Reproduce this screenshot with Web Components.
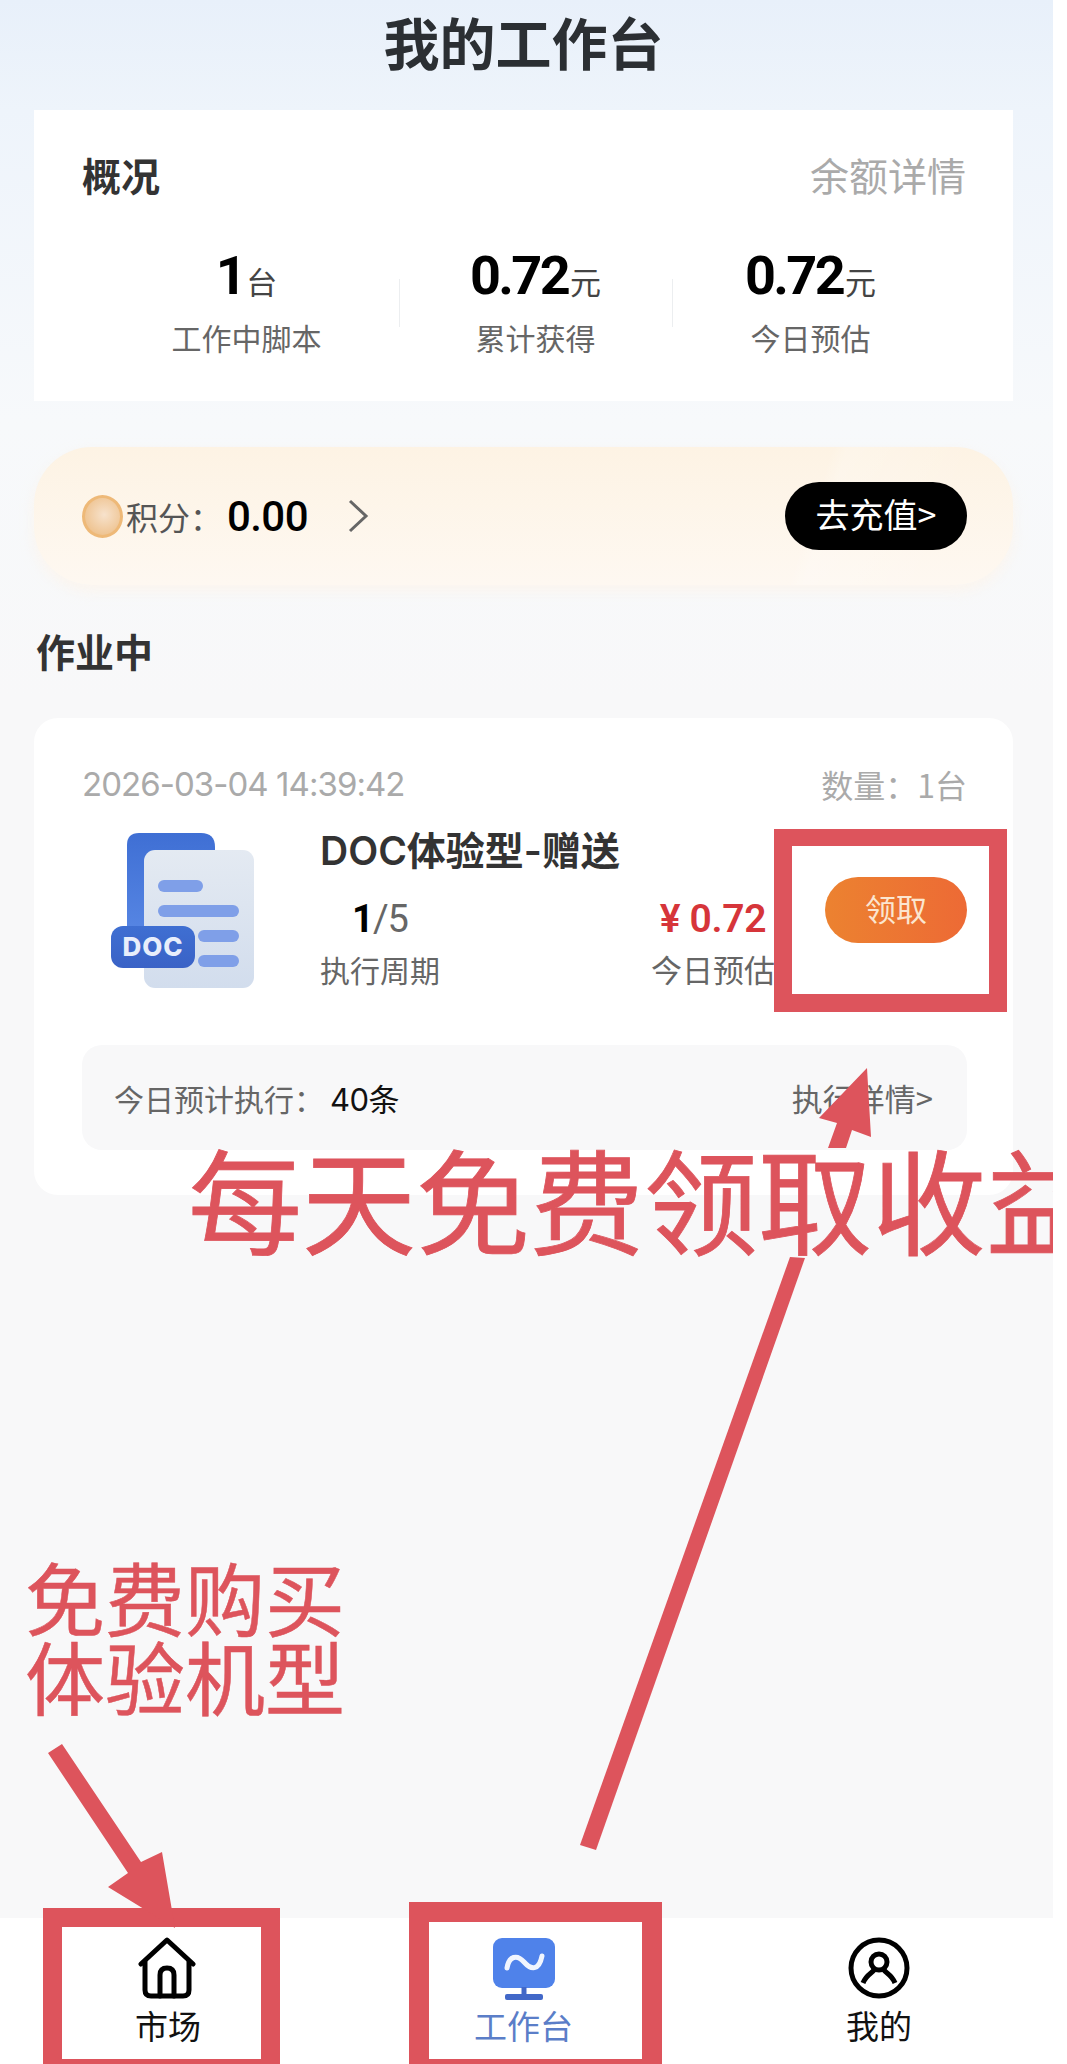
<!DOCTYPE html>
<html lang="zh">
<head>
<meta charset="utf-8">
<title>我的工作台</title>
<style>
    html, body { margin: 0; padding: 0; background: #fff; }
    body { font-family: "Noto Sans CJK SC", sans-serif; }
</style>
</head>
<body>
<work-page>
    <page-title>我的工作台</page-title>

    <overview-card>
        <stat-item value="1" unit="台" label="工作中脚本"></stat-item>
        <stat-item value="0.72" unit="元" label="累计获得" divider></stat-item>
        <stat-item value="0.72" unit="元" label="今日预估" divider></stat-item>
    </overview-card>

    <points-banner></points-banner>

    <section-title>作业中</section-title>

    <job-card></job-card>

    <bottom-nav slot="nav">
        <nav-item label="市场"><svg width="62" height="64" viewBox="0 0 62 64" fill="none" stroke="#000" stroke-width="5" stroke-linejoin="round" stroke-linecap="round"><path d="M4 27 30 3 56 27"/><path d="M8 25V53q0 6 6 6H46q6 0 6-6V25"/><path d="M23 59V38q0-7 7-7t7 7V59"/></svg></nav-item>
        <nav-item label="工作台" active><svg width="62" height="64" viewBox="0 0 62 64" fill="none"><rect x="0" y="1" width="62" height="50" rx="9" fill="#4f82ea"/><path d="M31 50V58" stroke="#4268c8" stroke-width="5"/><rect x="12" y="57" width="38" height="6" rx="2" fill="#4268c8"/><path d="M14 31C16 19 24 17 31 25S46 34 49 19" stroke="#fff" stroke-width="5" stroke-linecap="round" opacity=".92"/></svg></nav-item>
        <nav-item label="我的"><svg width="62" height="64" viewBox="0 0 62 64" fill="none" stroke="#000" stroke-width="5"><circle cx="31" cy="31" r="28"/><circle cx="31" cy="25" r="8"/><path d="M15 46C18 38 24 36 26 33M47 46C44 38 38 36 36 33"/></svg></nav-item>
    </bottom-nav>

    <note-layer slot="notes"></note-layer>
</work-page>

<script>
// page shell, the white strip on the right comes from the screenshot itself
class WorkPage extends HTMLElement {
    constructor() {
        super();
        this.attachShadow({ mode: 'open' }).innerHTML = `
            <style>
                :host { display: block; position: relative; width: 1067px; height: 2064px; overflow: hidden; background: #fff; }
                .screen {
                    width: 1053px; height: 2064px; display: flex; flex-direction: column;
                    background: linear-gradient(180deg, #e8f0fa 0, #eef4fb 110px, #f7f9fb 420px, #f8f8f9 700px);
                }
                .content { flex: 1; display: flex; flex-direction: column; }
            </style>
            <div class="screen">
                <div class="content"><slot></slot></div>
                <slot name="nav"></slot>
            </div>
            <slot name="notes"></slot>
        `;
    }
}

class PageTitle extends HTMLElement {
    constructor() {
        super();
        this.attachShadow({ mode: 'open' }).innerHTML = `
            <style>
                :host { display: block; height: 110px; padding-right: 6px; text-align: center; font-size: 56px; font-weight: 700; line-height: 82px; color: #2b2f33; }
            </style>
            <slot></slot>
        `;
    }
}

class OverviewCard extends HTMLElement {
    constructor() {
        super();
        this.attachShadow({ mode: 'open' }).innerHTML = `
            <style>
                :host { display: block; margin: 0 40px 0 34px; height: 291px; box-sizing: border-box; padding: 36px 47px 0 48px; background: #fff; }
                .head { display: flex; justify-content: space-between; align-items: center; height: 56px; }
                .name { font-size: 39px; font-weight: 700; color: #333; }
                .more { font-size: 39px; color: #aaa; }
                .stats { display: grid; grid-template-columns: 305px 273px 277px; margin: 41px 0 0 12px; }
            </style>
            <div class="head"><span class="name">概况</span><span class="more">余额详情</span></div>
            <div class="stats"><slot></slot></div>
        `;
    }
}

class StatItem extends HTMLElement {
    constructor() {
        super();
        const hasLine = this.hasAttribute('divider');
        this.attachShadow({ mode: 'open' }).innerHTML = `
            <style>
                :host { display: block; position: relative; text-align: center; }
                .line { position: absolute; left: 0; top: 36px; height: 48px; width: 1px; background: #eceef0; }
                .num { height: 66px; line-height: 66px; white-space: nowrap; }
                .v { font-family: Roboto, "Noto Sans CJK SC", sans-serif; font-size: 54px; font-weight: 700; letter-spacing: -2.6px; color: #000; }
                .u { font-size: 31px; color: #444; margin-left: 2px; }
                .label { margin-top: 6px; font-size: 30px; line-height: 44px; color: #666; }
            </style>
            ${hasLine ? '<div class="line"></div>' : ''}
            <div class="num"><span class="v">${this.getAttribute('value')}</span><span class="u">${this.getAttribute('unit')}</span></div>
            <div class="label">${this.getAttribute('label')}</div>
        `;
    }
}

class PointsBanner extends HTMLElement {
    constructor() {
        super();
        this.attachShadow({ mode: 'open' }).innerHTML = `
            <style>
                :host {
                    display: flex; align-items: center; margin: 46px 40px 0 34px; height: 138px; box-sizing: border-box; padding: 0 46px 0 48px;
                    border-radius: 58px;
                    background:
                        linear-gradient(108deg, transparent 0, transparent 78%, rgba(255,255,255,.2) 79.5%, rgba(255,255,255,0) 92%),
                        linear-gradient(180deg, #fdf3e4 0, #fef8f1 100%);
                    box-shadow: 0 6px 14px rgba(253, 244, 232, .7);
                }
                .coin {
                    width: 41px; height: 43px; border-radius: 50%; flex: none; box-sizing: border-box;
                    border: 3px solid #eeb978;
                    background: radial-gradient(circle at 55% 45%, #f7e2cc 0, #efc594 70%, #e8aa63 100%);
                }
                .lab { margin-left: 3px; font-size: 32px; color: #555; }
                .val { margin-left: 5px; font-family: Roboto, "Noto Sans CJK SC", sans-serif; font-size: 42px; font-weight: 500; letter-spacing: -.6px; color: #000; }
                svg { margin-left: 39px; flex: none; }
                .btn {
                    margin-left: auto; width: 182px; height: 68px; border-radius: 34px; background: #000; color: #fff;
                    font-size: 34px; line-height: 64px; text-align: center;
                }
            </style>
            <span class="coin"></span>
            <span class="lab">积分：</span>
            <span class="val">0.00</span>
            <svg width="22" height="36" viewBox="0 0 22 36" fill="none" stroke="#666" stroke-width="3"><path d="M3 3 19 18 3 33"/></svg>
            <span class="btn">去充值&gt;</span>
        `;
    }
}

class SectionTitle extends HTMLElement {
    constructor() {
        super();
        this.attachShadow({ mode: 'open' }).innerHTML = `
            <style>
                :host { display: block; margin: 40px 0 0 36px; height: 53px; font-size: 39px; font-weight: 700; line-height: 50px; color: #333; }
            </style>
            <slot></slot>
        `;
    }
}

class JobCard extends HTMLElement {
    constructor() {
        super();
        this.attachShadow({ mode: 'open' }).innerHTML = `
            <style>
                :host { display: block; margin: 40px 40px 0 34px; height: 477px; box-sizing: border-box; padding: 46px 46px 0 48px; background: #fff; border-radius: 24px; color: #666; }
                .top { display: flex; justify-content: space-between; align-items: center; height: 40px; color: #aaa; font-size: 33px; }
                .date { font-family: Inter, "Noto Sans CJK SC", sans-serif; letter-spacing: -.95px; }
                .count { font-size: 32px; }
                .body { display: flex; margin-top: 27px; height: 156px; }
                .pic { flex: none; width: 238px; padding-left: 27px; box-sizing: border-box; }
                .info { flex: 1; }
                .name { font-family: Inter, "Noto Sans CJK SC", sans-serif; font-size: 39px; font-weight: 600; line-height: 40px; color: #333; }
                .cols { display: flex; justify-content: space-between; margin-top: 25px; width: 455px; }
                .col { text-align: center; font-size: 30px; line-height: 40px; }
                .col b { display: block; height: 46px; line-height: 46px; font-family: Roboto, "Noto Sans CJK SC", sans-serif; font-weight: 400; font-size: 38px; letter-spacing: -1px; margin-bottom: 7px; }
                .col .done { font-weight: 700; color: #000; }
                .col.money { font-size: 31px; }
                .col.money b { color: #d6353a; font-weight: 600; font-size: 39px; letter-spacing: -.3px; }
                .get {
                    flex: none; align-self: flex-start; margin: 46px 0 0 0; width: 142px; height: 66px; border-radius: 33px;
                    background: linear-gradient(90deg, #ec8230, #ed6a35); color: #fbe6d0; font-size: 31px; line-height: 62px; text-align: center;
                }
                .strip {
                    display: flex; justify-content: space-between; align-items: center; margin-top: 58px; height: 105px; box-sizing: border-box; padding: 0 34px 0 32px;
                    background: #f8f8f9; border-radius: 20px; font-size: 30px;
                }
                .strip em { font-style: normal; margin-left: 6px; font-size: 31px; color: #111; font-family: Inter, "Noto Sans CJK SC", sans-serif; letter-spacing: -.5px; }
                .strip .go { font-size: 31px; }
            </style>
            <div class="top"><span class="date">2026-03-04 14:39:42</span><span class="count">数量：1台</span></div>
            <div class="body">
                <div class="pic">
                    <svg width="146" height="158" viewBox="0 0 146 158" font-family="Inter, sans-serif">
                        <defs>
                            <linearGradient id="back" x1="0" y1="0" x2="0" y2="1"><stop offset="0" stop-color="#3f6fd4"/><stop offset="1" stop-color="#5b8ae6"/></linearGradient>
                            <linearGradient id="sheet" x1="0" y1="0" x2="0" y2="1"><stop offset="0" stop-color="#e4eaf2"/><stop offset="1" stop-color="#d2dded"/></linearGradient>
                            <linearGradient id="tag" x1="0" y1="0" x2="0" y2="1"><stop offset="0" stop-color="#3f6fd2"/><stop offset="1" stop-color="#3a62c6"/></linearGradient>
                        </defs>
                        <path d="M18 14q0-12 12-12H92q14 0 14 14V120H18Z" fill="url(#back)"/>
                        <rect x="35" y="19" width="110" height="138" rx="11" fill="url(#sheet)"/>
                        <rect x="49" y="49" width="45" height="12" rx="6" fill="#7f9fe8"/>
                        <rect x="49" y="74" width="81" height="12" rx="6" fill="#7f9fe8"/>
                        <rect x="89" y="99" width="41" height="12" rx="6" fill="#7f9fe8"/>
                        <rect x="89" y="124" width="41" height="12" rx="6" fill="#7f9fe8"/>
                        <rect x="2" y="95" width="84" height="42" rx="12" fill="url(#tag)"/>
                        <text x="44" y="125" text-anchor="middle" font-size="26" font-weight="800" fill="#e8eefb" letter-spacing="1">DOC</text>
                    </svg>
                </div>
                <div class="info">
                    <div class="name">DOC体验型-赠送</div>
                    <div class="cols">
                        <div class="col"><b><span class="done">1</span>/5</b>执行周期</div>
                        <div class="col money"><b>¥ 0.72</b>今日预估</div>
                    </div>
                </div>
                <div class="get">领取</div>
            </div>
            <div class="strip">
                <span>今日预计执行：<em>40条</em></span>
                <span class="go">执行详情&gt;</span>
            </div>
        `;
    }
}

class BottomNav extends HTMLElement {
    constructor() {
        super();
        this.attachShadow({ mode: 'open' }).innerHTML = `
            <style>
                :host { display: flex; justify-content: space-between; height: 146px; box-sizing: border-box; padding: 19px 74px 0 68px; background: #fff; }
            </style>
            <slot></slot>
        `;
    }
}

class NavItem extends HTMLElement {
    constructor() {
        super();
        const color = this.hasAttribute('active') ? '#5b7ec8' : '#111';
        this.attachShadow({ mode: 'open' }).innerHTML = `
            <style>
                :host { display: flex; flex-direction: column; align-items: center; width: 200px; }
                .icon { height: 64px; }
                .label { margin-top: 2px; font-size: 33px; line-height: 44px; color: ${color}; }
            </style>
            <div class="icon"><slot></slot></div>
            <div class="label">${this.getAttribute('label')}</div>
        `;
    }
}

// the red marks added on top of the screenshot
class NoteLayer extends HTMLElement {
    constructor() {
        super();
        this.attachShadow({ mode: 'open' }).innerHTML = `
            <style>
                :host { position: absolute; left: 0; top: 0; width: 1067px; height: 2064px; pointer-events: none; }
                .frame { position: absolute; box-sizing: border-box; border: 0 solid #dd545c; }
                .big, .small { position: absolute; color: #dd545c; white-space: nowrap; }
                .big { left: 188px; top: 1137px; width: 865px; height: 120px; overflow: hidden; font-size: 114px; line-height: 120px; -webkit-text-stroke: .8px #dd545c; }
                .small { left: 25px; top: 1556px; font-size: 80px; line-height: 79px; -webkit-text-stroke: .5px #dd545c; }
                svg { position: absolute; left: 0; top: 0; }
            </style>
            <div class="frame" style="left:774px;top:829px;width:233px;height:183px;border-width:17px 18px 18px 18px"></div>
            <div class="frame" style="left:43px;top:1908px;width:237px;height:156px;border-width:19px 19px 5px 19px"></div>
            <div class="frame" style="left:409px;top:1902px;width:253px;height:162px;border-width:20px 20px 5px 20px"></div>
            <svg width="1067" height="2064" fill="#dd545c">
                <path d="M867 1068 819 1118 837 1123 828 1148 846 1148 852 1130 871 1137Z"/>
                <path d="M790 1257 805 1258 596 1850 580 1845Z"/>
                <path d="M48 1753 62 1744 141 1862 162 1852 175 1928 108 1887 128 1873Z"/>
            </svg>
            <div class="big">每天免费领取收益</div>
            <div class="small">免费购买<br>体验机型</div>
        `;
    }
}

customElements.define('work-page', WorkPage);
customElements.define('page-title', PageTitle);
customElements.define('overview-card', OverviewCard);
customElements.define('stat-item', StatItem);
customElements.define('points-banner', PointsBanner);
customElements.define('section-title', SectionTitle);
customElements.define('job-card', JobCard);
customElements.define('bottom-nav', BottomNav);
customElements.define('nav-item', NavItem);
customElements.define('note-layer', NoteLayer);
</script>
</body>
</html>
